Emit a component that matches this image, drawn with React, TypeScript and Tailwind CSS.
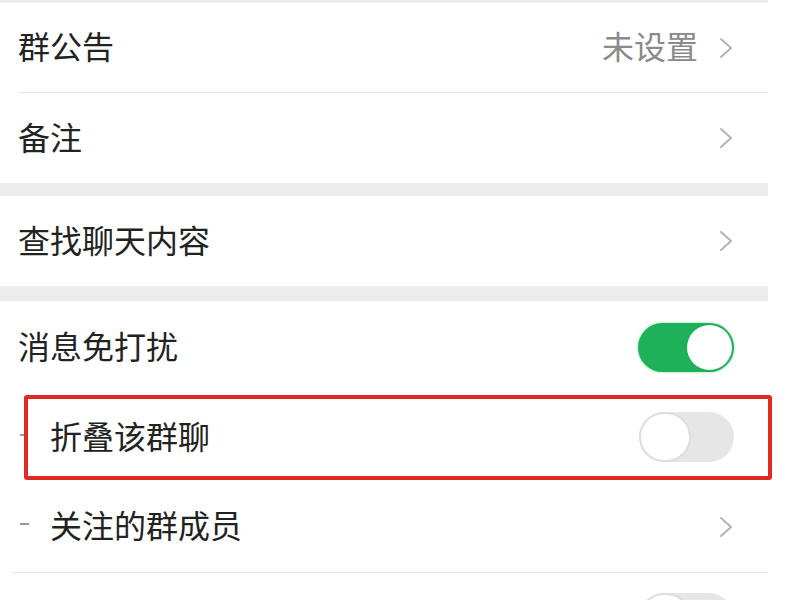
import React from 'react';

const font = { fontFamily: '"Noto Sans CJK SC", "Noto Sans", sans-serif' };

function Chevron() {
    return (
        <svg width="16" height="22" viewBox="0 0 16 22" fill="none" className="shrink-0">
            <path d="M3 2 L13 11 L3 20" stroke="#b4b4b4" strokeWidth="2" strokeLinecap="round" strokeLinejoin="round" />
        </svg>
    );
}

function Toggle({ on }: { on: boolean }) {
    if (on) {
        return (
            <div className="w-[96px] h-[49px] rounded-full bg-[#1fb15a] flex items-center justify-end p-[2px] shadow-[0_0_3px_rgba(31,177,90,0.5)]">
                <div className="w-[45px] h-[45px] rounded-full bg-white" />
            </div>
        );
    }
    return (
        <div className="w-[95px] h-[50px] rounded-full bg-[#e6e6e6] flex items-center justify-start">
            <div className="w-[52px] h-[50px] rounded-full bg-white border-2 border-[#dedede]" />
        </div>
    );
}

function Row({ label, value, toggle, indent, dash, height }: {
    label: string;
    value?: string;
    toggle?: boolean;
    indent?: boolean;
    dash?: boolean;
    height: string;
}) {
    return (
        <div className={`flex items-center justify-between bg-white ${height} ${indent ? 'pl-[20px]' : 'pl-[18px]'} pr-[34px]`}>
            <div className="flex items-center pb-[5px]">
                {indent && (
                    <span className={`block h-[2px] bg-[#9a9a9a] ${dash ? 'w-[9px]' : 'w-[4px]'} mr-[21px]`} />
                )}
                <span className={`text-[32px] leading-none text-[#222] ${indent && !dash ? 'ml-[5px]' : ''}`}>{label}</span>
            </div>
            <div className="flex items-center gap-[20px]">
                {value && <span className="text-[32px] leading-none text-[#8a8a8a] pb-[5px]">{value}</span>}
                {toggle === undefined ? <Chevron /> : <Toggle on={toggle} />}
            </div>
        </div>
    );
}

export default function App() {
    return (
        <div className="w-[800px] h-[600px] overflow-hidden bg-white" style={font}>
            <div className="w-[768px] flex flex-col">
                <div className="h-[3px] bg-[#ececec]" />
                <Row label="群公告" value="未设置" height="h-[89px]" />
                <div className="h-px bg-[#e6e6e6] ml-[18px]" />
                <Row label="备注" height="h-[90px]" />
                <div className="h-[13px] bg-[#ececec]" />
                <Row label="查找聊天内容" height="h-[90px]" />
                <div className="h-[15px] bg-[#ececec]" />
                <Row label="消息免打扰" toggle={true} height="h-[92px]" />
                <div className="relative">
                    <Row label="折叠该群聊" toggle={false} indent height="h-[88px]" />
                    <div className="absolute left-[24px] -right-[4px] top-[2px] bottom-[1px] border-4 border-[#de2a22] rounded-[3px] pointer-events-none" />
                </div>
                <Row label="关注的群成员" indent dash height="h-[91px]" />
                <div className="h-px bg-[#e6e6e6] ml-[12px]" />
                <Row label="置顶聊天" toggle={false} height="h-[90px]" />
            </div>
        </div>
    );
}
